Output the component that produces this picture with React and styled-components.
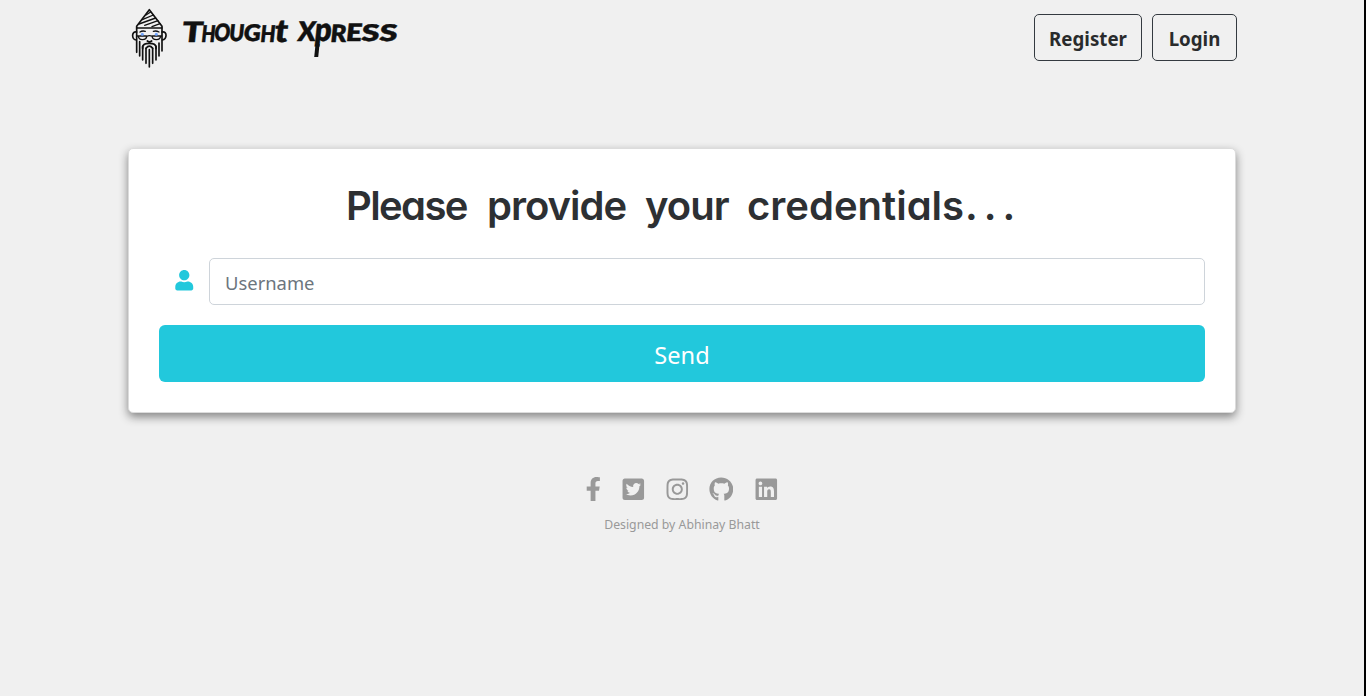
import React from "react";
import styled, { createGlobalStyle } from "styled-components";
import {
  FaUser,
  FaFacebookF,
  FaTwitterSquare,
  FaInstagram,
  FaGithub,
  FaLinkedin,
} from "react-icons/fa";

const GlobalStyle = createGlobalStyle`
  *, *::before, *::after { box-sizing: border-box; }
  html, body { margin: 0; background: #f0f0f0; }
  body { font-family: "Noto Sans", "Segoe UI", sans-serif; color: #292b2c; }
`;

const Page = styled.div`
  height: 100vh;
  overflow: hidden;
  background: #f0f0f0;
  border-right: 2px solid #000;
`;

const Container = styled.div`
  width: 1108px;
  margin: 0 auto;
`;

const Navbar = styled.header`
  display: flex;
  justify-content: space-between;
  align-items: flex-start;
  height: 148px;
`;

const Brand = styled.a`
  display: flex;
  align-items: flex-start;
`;

const BeardMark = styled.svg`
  width: 40px;
  height: 66px;
  margin: 6px 0 0 2px;
`;

const Wordmark = styled.svg`
  width: 235px;
  height: 66px;
  margin-left: 5px;
`;

const NavActions = styled.nav`
  display: flex;
  gap: 10px;
  margin: 14px -1px 0 0;
`;

const OutlineButton = styled.button`
  width: ${(p) => p.$width}px;
  height: 47px;
  padding: 2px 0 0;
  border: 1px solid #343a40;
  border-radius: 5px;
  background: transparent;
  color: #292b2c;
  font: 700 18.7px "Noto Sans", sans-serif;
  white-space: nowrap;
`;

const Card = styled.main`
  height: 265px;
  padding: 28px 30px 0;
  background: #fff;
  border: 1px solid #dcdcdc;
  border-radius: 5px;
  box-shadow: 0 4px 10px rgba(0, 0, 0, 0.45);
`;

const Title = styled.h1`
  display: flex;
  gap: 18px;
  height: 81px;
  margin: 0;
  padding-left: 187px;
  font: 600 40px/58px Inter, sans-serif;
  font-feature-settings: "cv11";
  color: #2d3033;
`;

const Word = styled.span`
  width: ${(p) => p.$width}px;
  letter-spacing: ${(p) => p.$spacing}px;
  white-space: nowrap;
`;

const Ellipsis = styled.span`
  letter-spacing: 6px;
  margin-left: 1px;
`;

const Field = styled.label`
  display: flex;
  height: 47px;
  margin-bottom: 20px;
`;

const FieldIcon = styled.span`
  width: 51px;
  flex: none;
  margin-right: -1px;
  display: flex;
  justify-content: center;
  padding-top: 12px;
  color: #22c8dc;
  font-size: 20.5px;
`;

const Input = styled.input`
  flex: 1;
  padding: 1px 15px 0;
  border: 1px solid #ced4da;
  border-radius: 5px;
  font: 400 18.4px "Noto Sans", sans-serif;
  &::placeholder { color: #6c757d; opacity: 1; }
`;

const SendButton = styled.button`
  display: block;
  width: 100%;
  height: 57px;
  padding: 2px 0 0;
  border: 0;
  border-radius: 6px;
  background: #22c8dc;
  color: #fff;
  font: 400 23.6px "Noto Sans", sans-serif;
`;

const Footer = styled.footer`
  display: flex;
  flex-direction: column;
  align-items: center;
  padding-top: 63.5px;
  color: #999;
`;

const SocialLinks = styled.div`
  display: flex;
  align-items: center;
  height: 25px;
  font-size: 24.6px;
`;

const SocialLink = styled.a`
  display: flex;
  justify-content: center;
  width: ${(p) => p.$width}px;
`;

const Credit = styled.p`
  margin: 14.5px 0 0;
  font-size: 12.25px;
  line-height: 18px;
`;

const wordmarkLetters = [
  { char: "T", x: 181.5, y: 42, size: 28, width: 21 },
  { char: "H", x: 201, y: 42, size: 23, width: 14 },
  { char: "O", x: 213.5, y: 41, size: 24, width: 16 },
  { char: "U", x: 228.5, y: 41, size: 23, width: 15 },
  { char: "G", x: 243, y: 41, size: 23, width: 17 },
  { char: "H", x: 260, y: 42, size: 23, width: 15 },
  { char: "t", x: 274, y: 42, size: 32, width: 13 },
  { char: "X", x: 297, y: 41, size: 27, width: 18 },
  { char: "p", x: 314, y: 41.5, size: 33, width: 17 },
  { char: "R", x: 330, y: 42, size: 24, width: 16 },
  { char: "E", x: 345.5, y: 41, size: 24, width: 16 },
  { char: "S", x: 361, y: 41.5, size: 23, width: 18 },
  { char: "S", x: 379, y: 41.5, size: 23, width: 18 },
];

function BrandLogo() {
  return (
    <Brand aria-label="Thought Xpress">
      <BeardMark viewBox="30 18 120 198" fill="none" stroke="#111" strokeWidth="5" strokeLinejoin="round" strokeLinecap="round">
        <path d="M88 29 L50 79 V84 H126 V79 Z" />
        <path d="M78 45 L92 36 M67 59 L100 45 M57 72 L107 54 M74 76 L114 62 M96 80 L120 71" strokeWidth="4" />
        <path d="M50 96 C34 92 34 119 49 120 M126 96 C143 92 141 119 127 120" />
        <path d="M50 84 V157 M126 84 V153" />
        <path d="M60 96 Q67 91 76 94 M100 94 Q108 91 117 96" strokeWidth="4" />
        <path d="M51 108 H78 M98 108 H125 M80 109 Q88 105 97 109 M55 108 Q56 119 67 119 Q80 119 80 108 M96 108 Q97 119 109 119 Q121 119 122 108" strokeWidth="4" />
        <circle cx="67" cy="103" r="4.5" fill="#70a5ff" stroke="none" />
        <circle cx="109" cy="103" r="4.5" fill="#70a5ff" stroke="none" />
        <path d="M82 123 Q88 128 95 123 M68 146 C66 132 77 130 88 130 C99 130 110 132 108 146 M78 145 Q88 132 98 145" />
        <path d="M59 125 V168 M68 139 V180 M78 145 V190 M88 149 V201 M98 145 V190 M108 139 V180 M117 129 V168" />
      </BeardMark>
      <Wordmark viewBox="175 0 235 66" fill="#111" stroke="#111" strokeWidth="0.4" strokeLinejoin="round">
        <g transform="translate(4.2 0) skewX(-6)" fontFamily="Lato, sans-serif" fontWeight="800">
          {wordmarkLetters.map((l, i) => (
            <text key={i} x={l.x} y={l.y} fontSize={l.size} textLength={l.width} lengthAdjust="spacingAndGlyphs">
              {l.char}
            </text>
          ))}
          <path d="M318 44 V57" strokeWidth="4" />
        </g>
      </Wordmark>
    </Brand>
  );
}

const titleWords = [
  { text: "Please", width: 123, spacing: -1.6 },
  { text: "provide", width: 140, spacing: -1 },
  { text: "your", width: 84, spacing: -1 },
  { text: "credentials", width: 267, spacing: 0, dots: "..." },
];

const socials = [
  { name: "Facebook", Icon: FaFacebookF, width: 36 },
  { name: "Twitter", Icon: FaTwitterSquare, width: 44 },
  { name: "Instagram", Icon: FaInstagram, width: 44 },
  { name: "GitHub", Icon: FaGithub, width: 44 },
  { name: "LinkedIn", Icon: FaLinkedin, width: 46 },
];

export default function App() {
  return (
    <Page>
      <GlobalStyle />
      <Container>
        <Navbar>
          <BrandLogo />
          <NavActions>
            <OutlineButton $width={108}>Register</OutlineButton>
            <OutlineButton $width={85}>Login</OutlineButton>
          </NavActions>
        </Navbar>
        <Card>
          <Title>
            {titleWords.map((w) => (
              <Word key={w.text} $width={w.width} $spacing={w.spacing}>
                {w.text}
                {w.dots && <Ellipsis>{w.dots}</Ellipsis>}
              </Word>
            ))}
          </Title>
          <Field>
            <FieldIcon><FaUser /></FieldIcon>
            <Input placeholder="Username" />
          </Field>
          <SendButton>Send</SendButton>
        </Card>
        <Footer>
          <SocialLinks>
            {socials.map(({ name, Icon, width }) => (
              <SocialLink key={name} $width={width} aria-label={name}><Icon /></SocialLink>
            ))}
          </SocialLinks>
          <Credit>Designed by Abhinay Bhatt</Credit>
        </Footer>
      </Container>
    </Page>
  );
}
